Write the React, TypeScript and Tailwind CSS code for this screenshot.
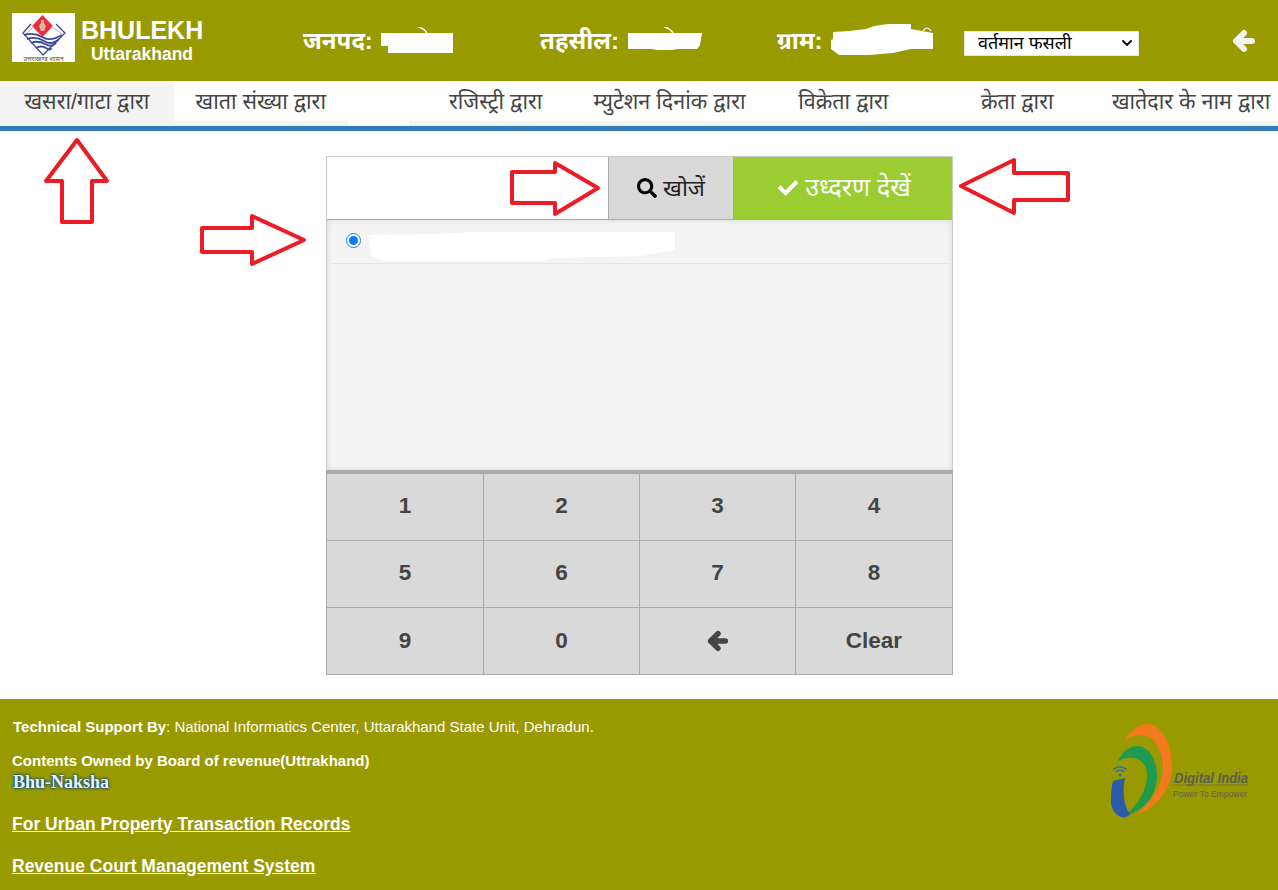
import { ChevronDown } from "lucide-react";
import { FaCheck, FaSearch } from "react-icons/fa";

const TABS = ["खसरा/गाटा द्वारा", "खाता संख्या द्वारा", "", "रजिस्ट्री द्वारा", "म्युटेशन दिनांक द्वारा", "विक्रेता द्वारा", "क्रेता द्वारा", "खातेदार के नाम द्वारा"];
const KEYS = ["1", "2", "3", "4", "5", "6", "7", "8", "9", "0"];

function StateLogo() {
  return (
    <svg viewBox="0 0 63 49" className="w-[63px] h-[49px] bg-white shrink-0">
      <path d="M30.5 2 L41 13 L30.5 24 L20 13 Z" fill="#ee2b3a" />
      <path d="M29 7h3v3l2 3-2 5h-3l-2-5 2-3z" fill="#d8b9a0" />
      <path d="M19 11 L11 20 L31 42 L53 20 L44 11" fill="none" stroke="#3d4a96" strokeWidth="1.3" />
      <path d="M22 13 L14 21 M39 13 L50 21" fill="none" stroke="#aab0d0" strokeWidth="1" />
      <path d="M12 22 Q22 19 30 24 T50 22 M15 26 Q24 23 32 28 T47 26 M19 30 Q26 27 33 31 T44 30 M24 35 Q29 32 34 35 T39 35" fill="none" stroke="#3d4a96" strokeWidth="1.9" />
      <text x="31.5" y="47.5" textAnchor="middle" fontSize="6.5" fill="#555" fontFamily="'Noto Sans', sans-serif">उत्तराखण्ड शासन</text>
    </svg>
  );
}

function DigitalIndiaLogo() {
  return (
    <svg viewBox="0 0 150 100" className="w-[150px] h-[100px]">
      <path d="M20 18 C28 6 36 1 43 1 C58 1 68 22 68 44 C68 66 52 86 31 92 C48 80 59 62 59 44 C59 30 52 16 42 13 C34 11 26 13 20 18Z" fill="#f47a20" />
      <path d="M13 39 C19 28 26 23 33 23 C45 23 53 37 53 53 C53 72 40 88 19 94 C33 84 43 68 43 52 C43 42 37 36 30 35 C24 34 18 35 13 39Z" fill="#1f9a50" />
      <path d="M9 58 L21 55 C18 68 20 84 26 91 C24 94 20 95 17 94 C10 91 6 84 7 74 C7 68 8 62 9 58Z" fill="#2a5cab" />
      <circle cx="16" cy="52" r="1.6" fill="#2a6fb0" />
      <path d="M12 49 Q16 45 20 49 M9.5 46.5 Q16 41 22.5 46.5" fill="none" stroke="#2a6fb0" strokeWidth="1.3" />
      <text x="70" y="60" fontSize="14" fontWeight="700" fontStyle="italic" fill="#5a5f55" fontFamily="'Liberation Sans', sans-serif" textLength="74" lengthAdjust="spacingAndGlyphs">Digital India</text>
      <path d="M69 62 H144" stroke="#6a6f40" strokeWidth="0.8" />
      <text x="69" y="74" fontSize="9.5" fill="#62664a" fontFamily="'Liberation Sans', sans-serif" textLength="74" lengthAdjust="spacingAndGlyphs">Power To Empower</text>
    </svg>
  );
}

function BackArrow({ className }: { className: string }) {
  return (
    <svg viewBox="0 0 24 24" className={className} fill="none" stroke="currentColor" strokeWidth="6" strokeLinecap="round" strokeLinejoin="round">
      <path d="M12 4 L4 12 L12 20 M4 12 H20" />
    </svg>
  );
}

function Annotations() {
  const arrows = [
    "77,140 107,181 92,181 92,222 62,222 62,181 46,181",
    "202,228 252,228 252,216 304,240 252,264 252,252 202,252",
    "512,172 555,172 555,163 598,188 555,214 555,203 512,203",
    "961,186 1014,160 1014,173 1068,173 1068,200 1014,200 1014,213",
  ];
  return (
    <svg viewBox="0 0 1278 890" className="absolute inset-0 w-[1278px] h-[890px] pointer-events-none">
      {arrows.map((points) => (
        <polygon key={points} points={points} fill="none" stroke="#ed1c24" strokeWidth="4" strokeLinejoin="round" />
      ))}
    </svg>
  );
}

export default function App() {
  return (
    <div className="relative w-[1278px] h-[890px] overflow-hidden flex flex-col bg-white font-['Liberation_Sans','Noto_Sans',sans-serif]">
      {/* Header */}
      <header className="h-[81px] bg-[#999900] flex items-center shrink-0">
        <div className="ml-3 -mt-[6px]">
          <StateLogo />
        </div>
        <div className="ml-[6px] w-[122px] text-center text-white font-bold -mt-[1px]">
          <div className="text-[25px] leading-[28px]">BHULEKH</div>
          <div className="text-[17.5px] leading-[20px]">Uttarakhand</div>
        </div>
        <div className="ml-[100px] w-[237px] flex items-center text-[24px] font-bold text-white">
          जनपद:
          {/* blanked-out value */}
          <svg viewBox="0 0 74 27" className="w-[74px] h-[27px] ml-[7px] -mt-[1px]">
            <path d="M1 6 H73 V26 H8 V19 H1Z" fill="#fff" />
            <path d="M38 0 Q44 1 47 6" fill="none" stroke="#fff" strokeWidth="1.5" />
          </svg>
        </div>
        <div className="w-[237px] flex items-center text-[24px] font-bold text-white">
          तहसील:
          <svg viewBox="0 0 76 24" className="w-[76px] h-[24px] ml-[8px] -mt-[4px]">
            <path d="M1 6 H75 L73 18 L70 22 H50 L45 23 H30 L25 22 H1Z" fill="#fff" />
            <path d="M37 0 Q43 1 46 6" fill="none" stroke="#fff" strokeWidth="1.5" />
          </svg>
        </div>
        <div className="w-[187px] flex items-center text-[24px] font-bold text-white">
          ग्राम:
          <svg viewBox="0 0 110 41" className="w-[110px] h-[41px] ml-[3px] -mt-[9px]">
            <path d="M7 16 L23 15 L40 13 L48 10 L62 8 H85 V13 L107 17 V33 H85 L67 37 L43 39 H13 L5 33 V24 L7 23Z" fill="#fff" />
            <path d="M97 15 Q101 9 105 15" fill="none" stroke="#fff" strokeWidth="1.2" />
          </svg>
        </div>
        <div className="relative w-[175px] h-[25px] mt-[6px] shrink-0">
          <select className="w-full h-full appearance-none bg-white text-black text-[18px] leading-[20px] pl-[13px] pb-[2px] border border-[#e5e5e5]" defaultValue="current">
            <option value="current">वर्तमान फसली</option>
          </select>
          <ChevronDown className="absolute right-[4px] top-[4px] w-[16px] h-[16px] text-[#111] pointer-events-none" strokeWidth={3} />
        </div>
        <BackArrow className="ml-[93px] w-[24px] h-[24px] text-[#f3f3f3]" />
      </header>

      {/* Tabs */}
      <nav className="h-[45px] flex shrink-0">
        {TABS.map((tab, i) =>
          tab ? (
            <div key={tab} className={`h-full flex flex-col ${i === 0 ? "bg-[#f3f3f3]" : ""} w-[174px]`}>
              <div className={`h-[40px] pt-[2px] flex items-center justify-center text-[21.5px] whitespace-nowrap text-[#444] ${i === 0 ? "" : "bg-white"}`}>{tab}</div>
              <div className="h-[5px] bg-[#f3f3f3]" />
            </div>
          ) : (
            <div key="gap" className="w-[61px] shrink-0" />
          )
        )}
      </nav>
      <div className="h-[5px] bg-[#337ab7] shrink-0" />

      {/* Search card */}
      <main className="h-[568px] pt-[25px] flex justify-center shrink-0">
        <div className="w-[627px] h-[519px] ml-[1px] border border-[#ccc] flex flex-col">
          <div className="h-[63px] flex border-b border-[#aaa] shrink-0">
            <div className="w-[281px] bg-white" />
            <button className="w-[125px] bg-[#d9d9d9] border-l border-[#aaa] flex items-center justify-center gap-[6px] text-[23px] text-[#222]">
              <FaSearch className="text-black text-[20px]" />
              खोजें
            </button>
            <button className="flex-1 pl-[3px] bg-[#9acd32] border-l border-[#aaa] flex items-center justify-center gap-[7px] text-[25px] text-white">
              <FaCheck className="text-[20px]" />
              उध्दरण देखें
            </button>
          </div>
          <div className="h-[250px] bg-[#f4f4f4] shadow-[inset_0_0_6px_rgba(0,0,0,0.12)] pl-1 pr-[3px] shrink-0">
            <div className="h-[44px] flex items-start border-b border-[#e6e6e6]">
              <input type="radio" defaultChecked className="w-[15px] h-[15px] mt-[13px] ml-[15px] accent-[#0a7cff]" />
              {/* blanked-out owner name */}
              <svg viewBox="0 0 308 31" className="w-[308px] h-[31px] mt-[11px] ml-[7px]">
                <path d="M0 4 L72 3 L105 1 H307 V19 L272 25 L189 27 L172 30 H15 L4 26Z" fill="#fff" />
              </svg>
            </div>
          </div>
          <div className="flex-1 -mx-px -mb-px grid grid-cols-[157px_156px_156px_1fr] grid-rows-[67px_67px_1fr] border border-[#aaa] border-t-4 bg-[#d9d9d9] text-[22.5px] font-bold text-[#444]">
            {KEYS.map((k, i) => (
              <button key={k} className={`${i < 8 ? "pb-[2px]" : "pb-px"} flex items-center justify-center border-[#aaa] ${(i + 1) % 4 ? "border-r" : ""} ${i < 8 ? "border-b" : ""}`}>
                {k}
              </button>
            ))}
            <button className="flex items-center justify-center border-r border-[#aaa]">
              <BackArrow className="w-[22px] h-[22px]" />
            </button>
            <button className="pb-px flex items-center justify-center">Clear</button>
          </div>
        </div>
      </main>

      {/* Footer */}
      <footer className="flex-1 bg-[#999900] text-white relative pl-3 pt-[19px]">
        <p className="text-[15px] leading-[18px] pl-[1px]">
          <b>Technical Support By</b>: National Informatics Center, Uttarakhand State Unit, Dehradun.
        </p>
        <p className="text-[15px] leading-[16px] font-bold mt-[17px]">Contents Owned by Board of revenue(Uttrakhand)</p>
        <div className="text-[18px] leading-[20px] font-bold font-['Liberation_Serif',serif] text-[#eaf4fb] ml-[1px] mt-[3px] [text-shadow:0_0_3px_#14507d,0_0_3px_#14507d,0_0_2px_#14507d]">Bhu-Naksha</div>
        <a className="block text-[17.5px] leading-[22px] font-bold underline mt-[21px]">For Urban Property Transaction Records</a>
        <a className="block text-[17.5px] leading-[22px] font-bold underline mt-[20px]">Revenue Court Management System</a>
        <div className="absolute left-[1104px] top-[24px]">
          <DigitalIndiaLogo />
        </div>
      </footer>

      <Annotations />
    </div>
  );
}
